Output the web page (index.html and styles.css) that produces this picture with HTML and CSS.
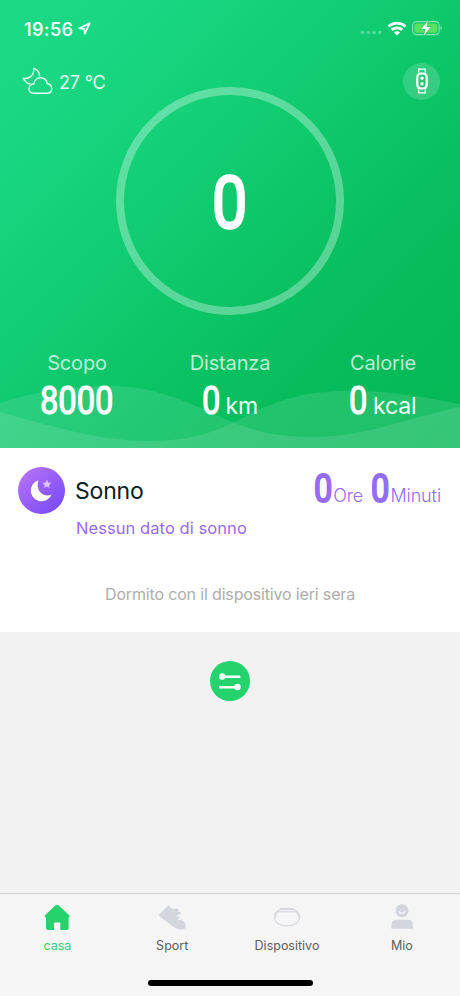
FILE: index.html
```html
<!DOCTYPE html>
<html lang="it">
<head>
<meta charset="utf-8">
<title>Casa</title>
<link rel="stylesheet" href="styles.css">
</head>
<body>
<div class="app">
  <header class="hero">
    <svg class="waves" viewBox="0 0 460 64" width="460" height="64">
      <path d="M0 19C35 8 70 2 110 2C155 2 190 19 230 37C260 50 285 53 315 53C365 53 410 33 460 23V64H0Z"/>
      <path d="M0 28C45 40 95 57 150 57C200 57 225 43 252 29C285 13 310 7 350 7C390 7 425 13 460 20V64H0Z"/>
    </svg>
    <div class="status">
      <div class="clock"><span>19:56</span>
        <svg width="13" height="13" viewBox="0 0 13 13"><path d="M1.2 6.4L11.6 1.3L6.8 11.6L6.2 6.9Z" fill="none" stroke="#eafff5" stroke-width="1.8" stroke-linejoin="round"/></svg>
      </div>
      <div class="signals">
        <svg width="22" height="5" viewBox="0 0 22 5" fill="#fff" opacity=".3"><circle cx="2.5" cy="2.5" r="1.8"/><circle cx="8.3" cy="2.5" r="1.8"/><circle cx="14" cy="2.5" r="1.8"/><circle cx="19.8" cy="2.5" r="1.8"/></svg>
        <svg class="wifi" width="20" height="15" viewBox="0 0 20 15"><g fill="none" stroke="#fff" stroke-width="2.8"><path d="M1.6 5.4C6.3.9 13.7.9 18.4 5.4"/><path d="M4.8 8.9C7.8 6.2 12.2 6.2 15.2 8.9"/></g><path d="M10 14.4L6.9 11.5C8.7 9.9 11.3 9.9 13.1 11.5Z" fill="#fff"/></svg>
        <svg class="battery" width="31" height="16" viewBox="0 0 31 16"><rect x=".6" y="1.6" width="26.6" height="13" rx="3.8" fill="none" stroke="#fff" stroke-opacity=".5" stroke-width="1.1"/><rect x="2.4" y="3.4" width="23" height="9.4" rx="2.2" fill="#5be05f"/><path d="M28.6 5.8Q31.2 8 28.6 10.4Z" fill="#fff" opacity=".55"/><path d="M15.8 1L9.2 9H13.2L12 15.4L18.6 7H14.5Z" fill="#fff" stroke="#27cd69" stroke-width="1.2" paint-order="stroke"/></svg>
      </div>
    </div>
    <div class="topbar">
      <div class="weather">
        <svg width="32" height="28" viewBox="0 0 32 28" fill="none" stroke="#e6fff3" stroke-width="1.4" stroke-linejoin="round" stroke-linecap="round"><path d="M5 15.8C3.2 14.7 2 13.2 1.2 11.3C6.9 12.4 12.5 8.4 11.6 1.4C15 2.5 17.4 5.4 17.7 9"/><path d="M5 15.8C6 16.4 6.9 16.7 7.9 16.8"/><path d="M11.8 26.2H24.8C28 26.2 29.7 24.1 29.7 21.4C29.7 18.5 27.5 16.6 25.2 16.7C24.5 13.2 22 10.8 18.5 10.8C14.9 10.8 12.2 13.3 11.9 17C9.2 17 7 18.9 7 21.5C7 24.3 9 26.2 11.8 26.2Z"/></svg>
        <span>27 °C</span>
      </div>
      <div class="band">
        <svg width="14" height="28" viewBox="0 0 14 28" fill="none" stroke="#fff" stroke-width="1.3"><path d="M3.7 5.6V2.2H10.3V5.6M3.7 22.4V25.8H10.3V22.4"/><rect x="1.2" y="5.4" width="11.6" height="17.2" rx="4.5" fill="#fff" stroke="none"/><rect x="3.4" y="7.6" width="7.2" height="12.8" rx="3.4" fill="#2ac673" stroke="none"/><circle cx="7" cy="11.3" r="1.7" fill="#fff" stroke="none"/><circle cx="7" cy="16.7" r="1.7" fill="#fff" stroke="none"/></svg>
      </div>
    </div>
    <div class="ring"><span class="num num-xl">0</span></div>
    <div class="stats">
      <div class="stat"><div class="label">Scopo</div><div class="value"><span class="num num-4">8000</span></div></div>
      <div class="stat"><div class="label">Distanza</div><div class="value"><span class="num">0</span><span class="unit">km</span></div></div>
      <div class="stat"><div class="label">Calorie</div><div class="value"><span class="num">0</span><span class="unit">kcal</span></div></div>
    </div>
  </header>
  <section class="sleep">
    <div class="sleep-head">
      <div class="moon">
        <svg width="47" height="47" viewBox="0 0 47 47"><path d="M20.5 13.3A10.7 10.7 0 1 0 33.5 27.4C26 31.2 16.8 23.5 20.5 13.3Z" fill="#fff"/><path d="M28.9 12.6L30.2 15.5L33.3 15.9L31 18L31.6 21.1L28.9 19.6L26.1 21.1L26.7 18L24.4 15.9L27.6 15.5Z" fill="#dcc2ff"/></svg>
      </div>
      <h2>Sonno</h2>
      <div class="duration"><span class="num">0</span><span class="u-ore">Ore</span><span class="num">0</span><span class="u-min">Minuti</span></div>
    </div>
    <p class="nodata">Nessun dato di sonno</p>
    <p class="hint">Dormito con il dispositivo ieri sera</p>
  </section>
  <main class="rest">
    <div class="tune"><svg width="40" height="40" viewBox="0 0 40 40" fill="#fff"><circle cx="12.2" cy="15.5" r="3.2"/><rect x="12" y="14.4" width="18.5" height="2.5" rx="1"/><circle cx="27.5" cy="26" r="3.2"/><rect x="9" y="24.9" width="18.5" height="2.5" rx="1"/></svg></div>
  </main>
  <nav class="tabs">
    <div class="tab active"><svg width="28" height="28" viewBox="0 0 28 28"><path d="M12.9 2.1Q14 1.2 15.1 2.1L26.3 12.2Q27.4 13.8 25.6 14.2V25Q25.6 27 23.8 27H17.3V20.5Q17.3 19.4 16.2 19.4H12.1Q11 19.4 11 20.5V27H5Q3 27 3 25V14.2Q.8 13.8 2 12.2Z" fill="#25d36c"/></svg><span>casa</span></div>
    <div class="tab"><svg width="28" height="28" viewBox="0 0 28 28"><path d="M10.9 2L1.4 11.2Q.8 12.6 2 13.8L17.2 25Q20.5 26.7 24.6 26.4Q27.8 26 27.7 22.3Q27.6 19.6 25.2 18.2L22.4 16.4L19.6 17.2L21.5 14.6L20.7 13.3L18.3 13.6L20.6 11.4L22.8 10.5L22.5 8.8L20 9.2L20.6 5.8Q19 4.8 16.9 5.4Q13.8 6.6 12.6 4.6Z" fill="#d4d6dd"/></svg><span>Sport</span></div>
    <div class="tab"><svg width="28" height="28" viewBox="0 0 28 28" fill="none" stroke="#d6d8dd"><path d="M6 7.8Q1.2 10.2 1.2 14.4Q2.6 22.9 14 22.9Q25.4 22.9 26.8 14.4Q26.8 10.2 22 7.8" stroke-width="1.1"/><path d="M6.2 7.2Q1.8 9.8 1.8 15M21.8 7.2Q26.2 9.8 26.2 15" stroke-width="1.9"/><path d="M5 8.8H23" stroke-width="1.2"/><path d="M6 7L7.8 5H20.2L22 7Z" fill="#d6d8dd" stroke="none"/></svg><span>Dispositivo</span></div>
    <div class="tab"><svg width="28" height="28" viewBox="0 0 28 28"><circle cx="14" cy="7.8" r="6.5" fill="#d4d6dd"/><path d="M11.2 8.8Q14 12 16.8 8.8" fill="none" stroke="#f5f5f5" stroke-width="1.4" stroke-linecap="round"/><path d="M3.5 25.8V22Q3.5 16.7 8.8 16.7H19.7Q25 16.7 25 22V25.8Z" fill="#d4d6dd"/></svg><span>Mio</span></div>
  </nav>
  <div class="home"><i></i></div>
</div>
</body>
</html>
```

FILE: styles.css
```css
* { box-sizing: border-box; }
body { margin: 0; font-family: Inter, "Liberation Sans", sans-serif; }
h2, p { margin: 0; font-weight: 400; }
svg { display: block; flex: none; }
.app { width: 460px; height: 996px; display: flex; flex-direction: column; background: #f2f2f2; overflow: hidden; }
.hero { height: 448px; position: relative; flex: none; color: #fff; background: linear-gradient(135deg, #1bd986 0%, #18d680 20%, #0ec86c 50%, #07bc5b 75%, #04b855 100%); }
.waves { position: absolute; left: 0; bottom: 0; fill: rgba(255,255,255,.11); }
.status { height: 60px; padding: 0 17px 2px 24px; display: flex; align-items: center; justify-content: space-between; }
.clock { display: flex; align-items: center; gap: 5px; font-size: 18px; font-weight: 600; color: #eafff5; letter-spacing: .35px; }
.clock svg { margin-top: -2px; }
.signals { display: flex; align-items: center; margin-top: -2px; }
.signals > svg:first-child { margin-top: 9px; }
.wifi { margin-left: 5px; }
.battery { margin-left: 5px; }
.topbar { height: 40px; padding: 2px 20px 0 22px; display: flex; align-items: center; justify-content: space-between; }
.weather { display: flex; align-items: center; gap: 5px; font-size: 18px; color: #e6fff3; letter-spacing: -.2px; }
.weather span { margin-top: 3px; }
.band { width: 37px; height: 37px; border-radius: 50%; background: rgba(255,255,255,.16); display: grid; place-items: center; }
.ring { width: 228px; height: 228px; margin: -13px auto 0; border: 8px solid rgba(255,255,255,.32); border-radius: 50%; display: grid; place-items: center; }
.num { display: inline-block; font-family: Roboto, sans-serif; font-weight: 400; font-size: 38px; line-height: 40px; width: 18.6px; transform: scaleX(.86); transform-origin: 0 50%; white-space: nowrap; -webkit-text-stroke: 1.2px currentColor; }
.num-4 { width: 74px; }
.num-xl { font-size: 73px; line-height: 80px; width: 36px; margin-top: 3px; -webkit-text-stroke-width: 2.6px; }
.stats { display: grid; grid-template-columns: repeat(3, 153px); margin-top: 36px; justify-content: center; }
.stat { text-align: center; }
.label { font-size: 20px; line-height: 24px; color: rgba(255,255,255,.73); letter-spacing: -.15px; }
.value { display: flex; justify-content: center; align-items: baseline; height: 40px; margin-top: 6px; gap: 5px; }
.unit { font-size: 23px; color: #f2fff8; letter-spacing: -.1px; }
.sleep { height: 184px; flex: none; background: #fff; }
.sleep-head { display: flex; align-items: center; padding: 18px 19px 0 18px; height: 66px; }
.moon { width: 47px; height: 47px; border-radius: 50%; background: linear-gradient(135deg, #bd76fb, #7146f5); }
h2 { margin: 1px 0 0 10px; font-size: 23px; line-height: 30px; color: #0b2024; letter-spacing: -.2px; }
.duration { margin: -2px 0 0 auto; display: flex; align-items: baseline; color: #956cf4; font-size: 18px; font-weight: 300; letter-spacing: -.1px; }
.duration .num { font-size: 38px; width: 19.3px; -webkit-text-stroke-width: 2px; }
.u-ore { margin-right: 8px; }
.nodata { margin: 3px 0 0 76px; font-size: 16.5px; line-height: 22px; color: #956cf4; letter-spacing: .07px; }
.hint { margin-top: 44px; text-align: center; font-size: 16px; line-height: 22px; color: #adadad; letter-spacing: -.16px; }
.rest { flex: 1; padding-top: 29px; }
.tune { width: 40px; height: 40px; margin: 0 auto; border-radius: 50%; background: #25d36c; }
.tabs { height: 77px; flex: none; background: #f5f5f5; border-top: 1px solid #d2d2d4; display: grid; grid-template-columns: repeat(4, 114.8px); padding-top: 9px; }
.tab { display: flex; flex-direction: column; align-items: center; font-size: 12.5px; line-height: 16px; color: #5e5e60; gap: 7px; }
.active { color: #37cf76; }
.home { height: 26px; flex: none; background: #f5f5f5; padding-top: 10px; }
.home i { display: block; width: 165px; height: 6px; border-radius: 3px; background: #000; margin: 0 auto; }
```
